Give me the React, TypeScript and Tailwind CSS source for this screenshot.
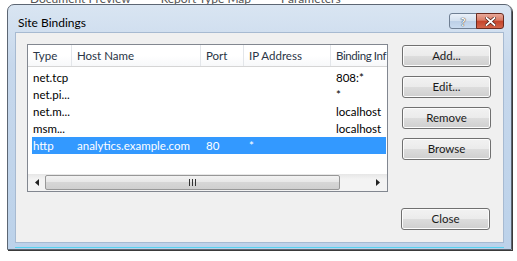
import React from "react";

const rows = [
  { type: "net.tcp", host: "", port: "", ip: "", info: "808:*" },
  { type: "net.pi...", host: "", port: "", ip: "", info: "*" },
  { type: "net.m...", host: "", port: "", ip: "", info: "localhost" },
  { type: "msm...", host: "", port: "", ip: "", info: "localhost" },
  { type: "http", host: "analytics.example.com", port: "80", ip: "*", info: "", selected: true },
];

function Button({ label, className = "" }: { label: string; className?: string }) {
  return (
    <div
      className={`flex h-[22px] w-[89px] items-center justify-center rounded-[3px] border border-[#707070] bg-[linear-gradient(to_bottom,#f2f2f2_0%,#ebebeb_50%,#dddddd_50%,#cfcfcf_100%)] text-[11.5px] text-[#1a1a1a] shadow-[inset_0_0_0_1px_#fcfcfc] ${className}`}
    >
      {label}
    </div>
  );
}

function HeaderCell({ label, width, className = "" }: { label: string; width: number; className?: string }) {
  return (
    <div
      className={`flex h-full shrink-0 items-center overflow-hidden whitespace-nowrap border-r border-[#e3e6ea] pl-[5px] ${className}`}
      style={{ width }}
    >
      {label}
    </div>
  );
}

export default function App() {
  const cols = [44, 129, 43, 87, 57];
  return (
    <div
      className="relative h-[261px] w-[517px] overflow-hidden bg-white"
      style={{ fontFamily: 'Lato, "Noto Sans", sans-serif' }}
    >
      {/* page text behind the dialog, mostly hidden */}
      <div className="flex h-[4px] items-end gap-[30px] overflow-hidden pl-[30px] text-[12px] leading-[12px] text-[#555]">
        <span className="translate-y-[1px]">Document Preview</span>
        <span className="translate-y-[1px]">Report Type Map</span>
        <span className="translate-y-[1px]">Parameters</span>
      </div>

      {/* window */}
      <div className="ml-[7px] flex h-[246px] w-[505px] flex-col rounded-t-[7px] border border-[#5c6673] bg-[linear-gradient(to_bottom,#d9e5f2_0%,#c7d8ec_60px,#bcd2ea_100%)] shadow-[1px_1px_0_#3a3a3a]">
        {/* title bar */}
        <div className="flex h-[27px] shrink-0 items-start justify-between pl-[10px] pr-[7px]">
          <span className="mt-[11px] text-[12px] leading-[14px] text-black">Site Bindings</span>
          <div className="mt-[8px] flex">
            <div className="flex h-[16px] w-[28px] items-center justify-center rounded-l-[3px] border border-[#6f7f93] bg-[linear-gradient(to_bottom,#eaf1f9_0%,#d3e0ef_50%,#bccfe6_50%,#c9dbef_100%)] text-[11px] font-bold leading-none text-white [text-shadow:0_0_1px_#333,0_0_1px_#333]">
              ?
            </div>
            <div className="-ml-px flex h-[16px] w-[28px] items-center justify-center rounded-r-[3px] border border-[#6a2b20] bg-[linear-gradient(to_bottom,#e9a99a_0%,#d97c66_45%,#c5432a_50%,#d2654a_100%)]">
              <svg width="11" height="9" viewBox="0 0 11 9">
                <path d="M1.5 1 L9.5 8 M9.5 1 L1.5 8" stroke="#4a1a12" strokeWidth="3.2" strokeLinecap="square" />
                <path d="M1.5 1 L9.5 8 M9.5 1 L1.5 8" stroke="#ffffff" strokeWidth="1.8" strokeLinecap="square" />
              </svg>
            </div>
          </div>
        </div>

        {/* client area */}
        <div className="mx-[7px] flex h-[211px] shrink-0 border border-[#a7bad1] bg-[#f0f0f0] pl-[11px] pt-[11px]">
          {/* list view */}
          <div className="flex h-[148px] w-[361px] shrink-0 flex-col overflow-hidden border border-[#828790] bg-white text-[11.5px]">
            <div className="flex h-[22px] shrink-0 overflow-hidden border-b border-[#d5d5d5] bg-[linear-gradient(to_bottom,#ffffff_0%,#ffffff_50%,#f7f8fa_100%)] text-[#2a3546]">
              <HeaderCell label="Type" width={cols[0]} />
              <HeaderCell label="Host Name" width={cols[1]} />
              <HeaderCell label="Port" width={cols[2]} />
              <HeaderCell label="IP Address" width={cols[3]} />
              <HeaderCell label="Binding Inf" width={cols[4]} className="border-r-0 tracking-[-0.4px]" />
            </div>
            <div className="flex flex-1 flex-col overflow-hidden pt-[2px]">
              {rows.map((r) => (
                <div
                  key={r.type}
                  className={`ml-[4px] mr-px flex h-[17px] shrink-0 items-center overflow-hidden whitespace-nowrap ${
                    r.selected ? "bg-[#3399ff] text-white" : "text-black"
                  }`}
                >
                  <span className="shrink-0 pl-[1px]" style={{ width: cols[0] - 4 }}>{r.type}</span>
                  <span className="shrink-0 pl-[5px]" style={{ width: cols[1] }}>{r.host}</span>
                  <span className="shrink-0 pl-[5px]" style={{ width: cols[2] }}>{r.port}</span>
                  <span className="shrink-0 pl-[5px]" style={{ width: cols[3] }}>{r.ip}</span>
                  <span className="shrink-0 pl-[5px]">{r.info}</span>
                </div>
              ))}
            </div>
            {/* horizontal scrollbar */}
            <div className="flex h-[17px] shrink-0 items-stretch bg-[linear-gradient(to_bottom,#e6e6e6,#f3f3f3_30%,#f3f3f3)]">
              <div className="flex w-[17px] items-center justify-center">
                <svg width="4" height="7" viewBox="0 0 4 7">
                  <path d="M4 0 L0 3.5 L4 7 Z" fill="#222" />
                </svg>
              </div>
              <div className="my-px flex w-[295px] items-center justify-center rounded-[2px] border border-[#979797] bg-[linear-gradient(to_bottom,#f2f2f2_0%,#e6e6e6_50%,#d6d6d6_50%,#cfcfcf_100%)]">
                <svg width="8" height="7" viewBox="0 0 8 7">
                  <path d="M0.5 0 V7 M3.5 0 V7 M6.5 0 V7" stroke="#333" strokeWidth="1" />
                </svg>
              </div>
              <div className="flex flex-1 items-center justify-end pr-[7px]">
                <svg width="4" height="7" viewBox="0 0 4 7">
                  <path d="M0 0 L4 3.5 L0 7 Z" fill="#222" />
                </svg>
              </div>
            </div>
          </div>

          {/* buttons */}
          <div className="ml-[14px] flex flex-col pt-px">
            <div className="flex flex-col gap-[9px]">
              <Button label="Add..." />
              <Button label="Edit..." />
              <Button label="Remove" />
              <Button label="Browse" />
            </div>
            <Button label="Close" className="-ml-[1px] mt-[48px]" />
          </div>
        </div>
        <div className="mx-[7px] mt-[4px] h-px bg-[#55d3f0]" />
      </div>
    </div>
  );
}
